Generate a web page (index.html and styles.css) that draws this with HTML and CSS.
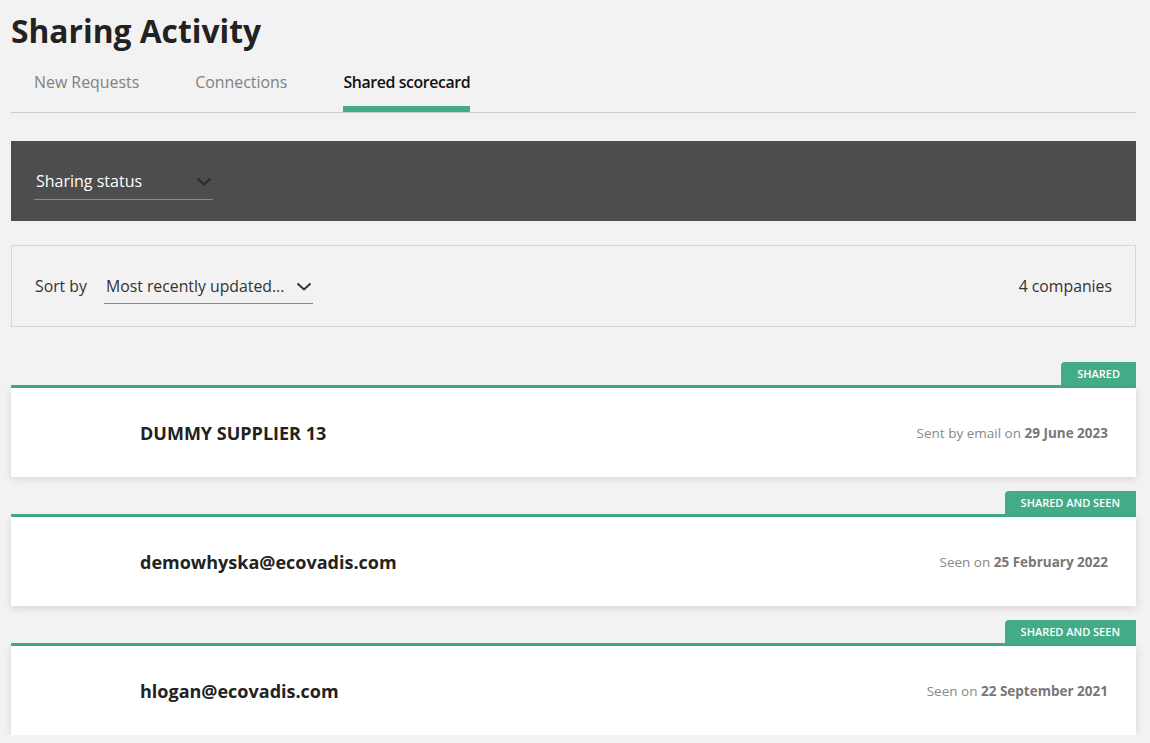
FILE: index.html
```html
<!DOCTYPE html>
<html lang="en">

<head>
    <meta charset="UTF-8">
    <meta name="viewport" content="width=device-width, initial-scale=1.0">
    <title>Sharing Activity</title>
    <link rel="stylesheet" href="styles.css">
</head>

<body>

    <div class="page">
        <h1 class="page-title">Sharing Activity</h1>

        <div class="tabs">
            <a class="tab">New Requests</a>
            <a class="tab">Connections</a>
            <a class="tab active">Shared scorecard</a>
        </div>

        <div class="filter-bar">
            <div class="dropdown dropdown-light">
                <span>Sharing status</span>
                <svg class="chevron" width="16" height="9" viewBox="0 0 16 9">
                    <polyline points="1.5,1.5 8,7.5 14.5,1.5" fill="none" stroke="#2b2b2b" stroke-width="2" />
                </svg>
            </div>
        </div>

        <div class="sort-bar">
            <div class="sort-left">
                <span class="sort-label">Sort by</span>
                <div class="dropdown dropdown-dark">
                    <span>Most recently updated...</span>
                    <svg class="chevron" width="16" height="9" viewBox="0 0 16 9">
                        <polyline points="1.5,1.5 8,7.5 14.5,1.5" fill="none" stroke="#333" stroke-width="2" />
                    </svg>
                </div>
            </div>
            <span class="count">4 companies</span>
        </div>

        <div class="card-list">
            <div class="card">
                <div class="card-head"><span class="badge">Shared</span></div>
                <div class="card-body">
                    <span class="company upper">Dummy Supplier 13</span>
                    <span class="status">Sent by email on <b>29 June 2023</b></span>
                </div>
            </div>

            <div class="card">
                <div class="card-head"><span class="badge">Shared and seen</span></div>
                <div class="card-body">
                    <span class="company">demowhyska@ecovadis.com</span>
                    <span class="status">Seen on <b>25 February 2022</b></span>
                </div>
            </div>

            <div class="card">
                <div class="card-head"><span class="badge">Shared and seen</span></div>
                <div class="card-body">
                    <span class="company">hlogan@ecovadis.com</span>
                    <span class="status">Seen on <b>22 September 2021</b></span>
                </div>
            </div>
        </div>
    </div>

</body>

</html>
```

FILE: styles.css
```css
body {
    font-family: "Open Sans", "Noto Sans", sans-serif;
    background-color: #f2f2f2;
    margin: 0;
    overflow: hidden;
}

.page {
    padding: 0 14px 0 11px;
}

.page-title {
    margin: 9px 0 0;
    font-size: 31.75px;
    font-weight: 700;
    line-height: 43px;
    color: #222;
}

.tabs {
    display: flex;
    gap: 56px;
    margin-top: 20px;
    padding-left: 23px;
    border-bottom: 1px solid #cccccc;
}

.tab {
    font-size: 15.9px;
    line-height: 20px;
    color: #808080;
    padding-bottom: 14px;
    border-bottom: 6px solid transparent;
    cursor: pointer;
}

.tab.active {
    color: #111;
    font-weight: 600;
    letter-spacing: -0.4px;
    border-bottom-color: #43ac87;
}

.filter-bar {
    margin-top: 28px;
    background-color: #4d4d4d;
    padding: 29px 23px 21px;
}

.dropdown {
    display: flex;
    align-items: center;
    justify-content: space-between;
    cursor: pointer;
}

.dropdown-light {
    width: 179px;
    font-size: 16px;
    line-height: 22px;
    color: #fff;
    border-bottom: 1px solid #8a8a8a;
    padding: 0 0 7px 2px;
    box-sizing: border-box;
}

.dropdown-light .chevron {
    margin-right: 1px;
}

.sort-bar {
    margin-top: 24px;
    height: 82px;
    box-sizing: border-box;
    border: 1px solid #d6d6d6;
    display: flex;
    align-items: center;
    justify-content: space-between;
    padding: 0 23px;
    font-size: 15.8px;
    color: #333;
}

.sort-left {
    display: flex;
    align-items: flex-start;
    gap: 17px;
    margin-top: 8px;
}

.sort-label {
    line-height: 20px;
}

.dropdown-dark {
    width: 209px;
    box-sizing: border-box;
    padding: 0 1px 7px 2px;
    line-height: 20px;
    border-bottom: 1px solid #888;
}

.count {
    color: #333;
}

.card-list {
    margin-top: 35px;
    display: flex;
    flex-direction: column;
    gap: 14px;
}

.card-head {
    display: flex;
    justify-content: flex-end;
    border-bottom: 3px solid #43ac87;
}

.badge {
    background-color: #43ac87;
    color: #fff;
    font-size: 11px;
    font-weight: 600;
    text-transform: uppercase;
    line-height: 23px;
    padding: 0 16px;
    border-top-left-radius: 4px;
}

.card-body {
    background-color: #fff;
    height: 89px;
    display: flex;
    align-items: center;
    justify-content: space-between;
    padding: 0 28px 0 129px;
    box-shadow: 0 2px 8px rgba(0, 0, 0, 0.12);
}

.company {
    font-size: 18px;
    font-weight: 700;
    color: #222;
}

.company.upper {
    text-transform: uppercase;
}

.status {
    font-size: 13.5px;
    color: #888;
}

.status b {
    color: #777;
}
```
